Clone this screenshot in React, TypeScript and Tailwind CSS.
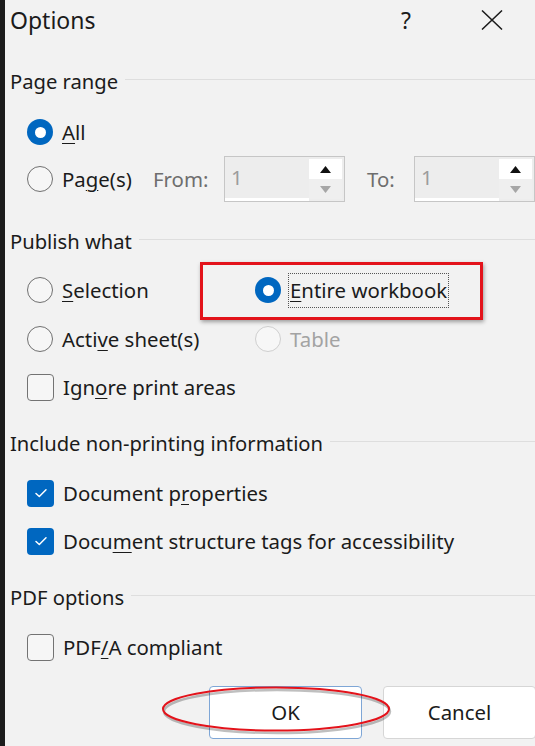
import React from "react";

const FONT = { fontFamily: '"Noto Sans", "Open Sans", Arial, sans-serif' };

function Radio({ checked = false, disabled = false }: { checked?: boolean; disabled?: boolean }) {
  if (checked) {
    return (
      <span className="flex h-[26px] w-[26px] shrink-0 items-center justify-center rounded-full bg-[#0067c0]">
        <span className="h-[11px] w-[11px] rounded-full bg-white" />
      </span>
    );
  }
  return (
    <span
      className={
        disabled
          ? "h-[26px] w-[26px] shrink-0 rounded-full border-[1.5px] border-[#cfcfcf] bg-[#f7f7f7]"
          : "h-[26px] w-[26px] shrink-0 rounded-full border-[1.5px] border-[#707070] bg-[#f6f6f6]"
      }
    />
  );
}

function Checkbox({ checked = false }: { checked?: boolean }) {
  if (checked) {
    return (
      <span className="flex h-[27px] w-[27px] shrink-0 items-center justify-center rounded-[4px] bg-[#0067c0]">
        <svg width="14" height="12" viewBox="0 0 14 12" fill="none">
          <path d="M2 6.5 L5.3 9.5 L12 2.8" stroke="white" strokeWidth="1.5" strokeLinecap="round" strokeLinejoin="round" />
        </svg>
      </span>
    );
  }
  return <span className="h-[27px] w-[27px] shrink-0 rounded-[4px] border-[1.5px] border-[#737373] bg-[#f6f6f6]" />;
}

function SectionHeader({ title, cls }: { title: string; cls: string }) {
  return (
    <div className={"flex items-center pl-[5px] " + cls}>
      <span className="text-[20.2px] text-[#1b1b1b] whitespace-nowrap">{title}</span>
      <span className="ml-[7px] h-px flex-1 bg-[#dedede] -translate-y-[2px]" />
    </div>
  );
}

function Spinner() {
  return (
    <div className="flex h-[46px] w-[121px] shrink-0 border border-[#c6c6c6] bg-[#ededed]">
      <div className="flex flex-1 items-center border-b-[3px] border-white pl-[6px] text-[20.4px] text-[#9c9c9c]">1</div>
      <div className="my-[2px] mr-[2px] flex w-[33px] flex-col">
        <div className="flex flex-1 items-center justify-center bg-white">
          <svg width="11" height="7" viewBox="0 0 11 7">
            <path d="M5.5 0 L11 7 L0 7 Z" fill="#111" />
          </svg>
        </div>
        <div className="flex flex-1 items-center justify-center bg-[#efefef]">
          <svg width="11" height="7" viewBox="0 0 11 7">
            <path d="M0 0 L11 0 L5.5 7 Z" fill="#a6a6a6" />
          </svg>
        </div>
      </div>
    </div>
  );
}

export default function App() {
  return (
    <div className="flex h-[746px] w-[535px] overflow-hidden bg-[#1c1c1c]" style={FONT}>
      <div className="w-[5px] shrink-0 bg-[#1c1c1c]" />
      <div className="flex flex-1 flex-col bg-[#f2f2f2] text-[#1b1b1b]">
        {/* Title bar */}
        <div className="flex h-[40px] items-center pl-[5px]">
          <span className="text-[23px] leading-none">Options</span>
          <span className="ml-auto mr-[70px] text-[23px] leading-none">?</span>
          <svg className="mr-[33px]" width="22" height="20" viewBox="0 0 22 20">
            <path d="M1 0.5 L21 19.5 M21 0.5 L1 19.5" stroke="#1b1b1b" strokeWidth="1.5" />
          </svg>
        </div>

        <SectionHeader title="Page range" cls="mt-[22px] h-[38px]" />

        <div className="mt-[8px] flex h-[48px] items-center pl-[22px]">
          <Radio checked />
          <span className="ml-[9px] text-[20.4px]">
            <u className="underline-offset-[3px] decoration-1">A</u>ll
          </span>
        </div>

        <div className="flex h-[46px] items-center pl-[22px]">
          <Radio />
          <span className="ml-[9px] w-[91px] text-[20.4px]">
            Pa<u className="underline-offset-[3px] decoration-1">g</u>e(s)
          </span>
          <span className="w-[71px] text-[20.4px] text-[#6e6e6e]">From:</span>
          <Spinner />
          <span className="ml-[22px] w-[47px] text-[20.4px] text-[#6e6e6e]">To:</span>
          <Spinner />
        </div>

        <SectionHeader title="Publish what" cls="mt-[20px] h-[38px]" />

        <div className="relative mt-[6px] grid h-[48px] grid-cols-[228px_1fr] items-center pl-[22px]">
          <div className="flex items-center">
            <Radio />
            <span className="ml-[9px] text-[20.4px]">
              <u className="underline-offset-[3px] decoration-1">S</u>election
            </span>
          </div>
          <div className="flex items-center">
            <Radio checked />
            <span className="ml-[7px] border border-dotted border-[#555] px-[1px] text-[20.4px] leading-[33px]">
              <u className="underline-offset-[3px] decoration-1">E</u>ntire workbook
            </span>
          </div>
          <div className="pointer-events-none absolute left-[195px] top-[-4px] h-[58px] w-[283px] border-[3px] border-[#e3131b] shadow-[1px_2px_4px_rgba(0,0,0,0.35)]" />
        </div>

        <div className="grid h-[50px] grid-cols-[228px_1fr] items-center pl-[22px]">
          <div className="flex items-center">
            <Radio />
            <span className="ml-[9px] text-[20.4px]">
              Acti<u className="underline-offset-[3px] decoration-1">v</u>e sheet(s)
            </span>
          </div>
          <div className="flex items-center">
            <Radio disabled />
            <span className="ml-[9px] text-[20.4px] text-[#a3a3a3]">Table</span>
          </div>
        </div>

        <div className="flex h-[46px] items-center pl-[22px]">
          <Checkbox />
          <span className="ml-[9px] text-[20.4px]">
            Ign<u className="underline-offset-[3px] decoration-1">o</u>re print areas
          </span>
        </div>

        <SectionHeader title="Include non-printing information" cls="mt-[14px] h-[38px]" />

        <div className="mt-[7px] flex h-[48px] items-center pl-[22px]">
          <Checkbox checked />
          <span className="ml-[9px] text-[20.4px]">
            Document p<u className="underline-offset-[3px] decoration-1">r</u>operties
          </span>
        </div>

        <div className="flex h-[48px] items-center pl-[22px]">
          <Checkbox checked />
          <span className="ml-[9px] text-[20.4px]">
            Docu<u className="underline-offset-[3px] decoration-1">m</u>ent structure tags for accessibility
          </span>
        </div>

        <SectionHeader title="PDF options" cls="mt-[13px] h-[38px]" />

        <div className="mt-[7px] flex h-[48px] items-center pl-[22px]">
          <Checkbox />
          <span className="ml-[9px] text-[20.4px]">
            PDF<u className="underline-offset-[3px] decoration-1">/</u>A compliant
          </span>
        </div>

        <div className="relative mt-[15px] flex gap-[21px] pl-[204px]">
          <button className="flex h-[53px] w-[153px] shrink-0 items-center justify-center rounded-[4px] border border-[#7ea6d6] bg-white text-[20.4px] text-[#1b1b1b]">
            OK
          </button>
          <button className="flex h-[53px] w-[153px] shrink-0 items-center justify-center rounded-[4px] border border-[#d6d6d6] bg-white text-[20.4px] text-[#1b1b1b]">
            Cancel
          </button>
          <svg className="pointer-events-none absolute left-[152px] top-[-3px]" width="240" height="54" viewBox="0 0 240 54" fill="none">
            <ellipse cx="119" cy="27" rx="113" ry="21.5" stroke="rgba(0,0,0,0.25)" strokeWidth="2.5" transform="translate(1 1.5)" />
            <ellipse cx="119" cy="26" rx="113" ry="21.5" stroke="#e3131b" strokeWidth="2" />
          </svg>
        </div>
      </div>
    </div>
  );
}
